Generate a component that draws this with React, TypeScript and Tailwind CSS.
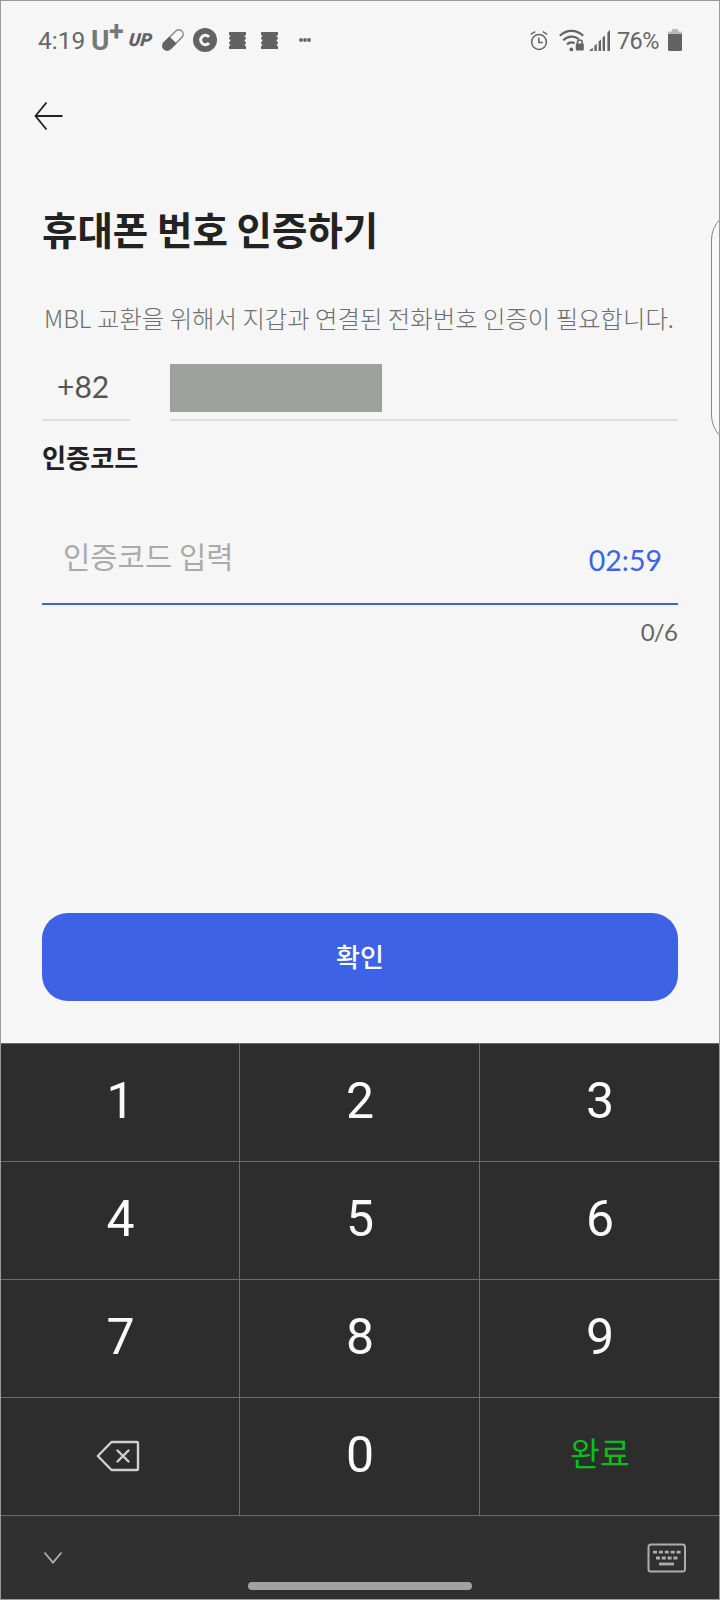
import React, { useState } from "react";

interface KeyProps {
  label: React.ReactNode;
  name: string;
  className?: string;
  onPress: () => void;
}

const AlarmIcon = () => (
  <svg width="18" height="21" viewBox="0 0 18 21" fill="none" stroke="#666" strokeWidth="1.5">
    <circle cx="9" cy="12" r="7.4" />
    <path d="M8.8 7.5v5h4M.8 4.3 5.2 1.6M17.2 4.3l-4.4-2.7" />
  </svg>
);

const WifiIcon = () => (
  <svg width="26" height="23" viewBox="0 0 26 23" fill="none" stroke="#636363" strokeWidth="2.2">
    <path d="M.8 6.8c6.8-6.6 16.6-6.6 23.4 0M4.2 11.3c4.6-4.6 11-4.9 15.6-1.1M8 15.4c2.3-2.2 5-2.5 7.6-1.1" />
    <circle cx="12.4" cy="20.4" r="1.9" fill="#636363" stroke="none" />
    <rect x="16.8" y="14.6" width="8" height="6.8" rx=".8" fill="#636363" stroke="none" />
    <path d="M18.4 15v-1.6a2.4 2.4 0 0 1 4.8 0V15" strokeWidth="1.5" />
  </svg>
);

const SignalIcon = () => (
  <svg width="22" height="21" viewBox="0 0 22 21" fill="#636363">
    <path d="M0 21l3.8-3.6V21zM5.4 21v-5.2l2.4-2.2V21zM9.6 21v-9.4L12 9.4V21zM13.6 21V7.6L16 5.4V21zM18.4 21V2.6L21 0v21z" />
  </svg>
);

const BatteryIcon = () => (
  <svg width="14" height="22" viewBox="0 0 14 22">
    <path d="M4 0h6v2.6h2.6Q14 2.6 14 4v1.5H0V4q0-1.4 1.4-1.4H4z" fill="#b9b9b9" />
    <path d="M0 5h14v15.4q0 1.6-1.6 1.6H1.6Q0 22 0 20.4z" fill="#636363" />
  </svg>
);

const PillIcon = () => (
  <svg width="22" height="22" viewBox="0 0 22 22">
    <g transform="rotate(45 11 11)">
      <rect x="6.6" y="-1.6" width="8.8" height="25.2" rx="4.4" fill="none" stroke="#777" strokeWidth="1.3" />
      <path d="M6 11h10v8.2a5 5 0 0 1-10 0z" fill="#636363" />
    </g>
  </svg>
);

const CoinIcon = () => (
  <svg width="24" height="24" viewBox="0 0 24 24">
    <circle cx="12" cy="12" r="12" fill="#636363" />
    <path d="M16 9a4.7 4.7 0 1 0 0 6" fill="none" stroke="#f5f5f5" strokeWidth="3" />
  </svg>
);

const TicketIcon = () => (
  <svg width="17" height="17" viewBox="0 0 17 17" fill="#636363">
    <path d="M0 0h17v2.8l-1.6 1.4 1.6 1.2v1.2l-1.6 1.900 1.600 1.900v1.200l-1.600 1.400 1.600 1.200V17H0v-2.800l1.600-1.200L0 11.600v-1.200l1.600-1.900L0 6.600V5.400l1.600-1.200L0 2.800z" />
  </svg>
);

const StatusBar = () => (
  <div className="flex h-[78px] items-center pl-[37px] pr-[37px] font-[Roboto,sans-serif] text-[24px] text-[#666]">
    <span className="mt-[2px] w-[53px] text-[24.5px]">4:19</span>
    <span className="flex w-[37px] font-bold leading-none text-[#777]">
      <span className="mt-[2px] w-[18px] text-[28px]">U</span>
      <span className="-mt-[6px] text-[27px]">+</span>
    </span>
    <span className="w-[34px] -skew-x-6 pl-[1px] text-[18px] font-black italic leading-none text-[#636363]">UP</span>
    <PillIcon />
    <span className="ml-[9px]"><CoinIcon /></span>
    <span className="ml-[12px]"><TicketIcon /></span>
    <span className="ml-[15px]"><TicketIcon /></span>
    <svg className="ml-[21px]" width="12" height="4" viewBox="0 0 12 4" fill="#636363">
      <circle cx="2" cy="2" r="1.9" />
      <circle cx="6" cy="2" r="1.9" />
      <circle cx="10" cy="2" r="1.9" />
    </svg>

    <div className="ml-auto flex items-center">
      <AlarmIcon />
      <span className="ml-[11px]"><WifiIcon /></span>
      <span className="ml-[4px]"><SignalIcon /></span>
      <span className="mt-[3px] ml-[6px] w-[51px] text-[23.5px] tracking-[-0.6px]">76%</span>
      <BatteryIcon />
    </div>
  </div>
);

const BackspaceIcon = () => (
  <svg className="-ml-[6px] mt-[1px]" width="44" height="32" viewBox="0 0 44 32" fill="none" stroke="#d0d0d0" strokeWidth="2.4" strokeLinejoin="round" strokeLinecap="round">
    <path d="M15.5 2H41a1 1 0 0 1 1 1v26a1 1 0 0 1-1 1H15.5L1.8 16z" />
    <path d="m21.5 10.5 11 11M32.5 10.5l-11 11" />
  </svg>
);

const KeyboardIcon = () => (
  <svg width="40" height="30" viewBox="0 0 40 30" fill="none" stroke="#adadad">
    <rect x="1.5" y="1.5" width="36.5" height="27" rx="2.5" strokeWidth="2" />
    <path d="M6 9.2h28" strokeWidth="2.8" strokeDasharray="4 1.9" />
    <path d="M9 15h23" strokeWidth="2.8" strokeDasharray="4 1.8" />
    <path d="M12 21h15" strokeWidth="2.8" />
  </svg>
);

const Key: React.FC<KeyProps> = ({ label, name, className = "", onPress }) => (
  <button
    type="button"
    onClick={onPress}
    aria-label={name}
    className={`flex h-[118px] items-center justify-center border-t border-r border-[#6b6b6b] pb-[2px] pl-[1px] nth-[3n]:border-r-0 ${className}`}
  >
    {label}
  </button>
);

const App: React.FC = () => {
  const [code, setCode] = useState("");

  const addDigit = (digit: string) => {
    setCode((prev) => (prev.length < 6 ? prev + digit : prev));
  };

  return (
    <div className="relative flex h-[1600px] w-[720px] flex-col overflow-hidden border border-[#999] bg-[#f6f6f6] font-['Noto_Sans_CJK_KR',sans-serif] text-[#222]">
      <StatusBar />

      <header className="flex h-[76px] items-center pb-[2px] pl-[33px]">
        <button type="button" aria-label="뒤로">
          <svg width="29" height="30" viewBox="0 0 29 30" fill="none" stroke="#222" strokeWidth="1.8">
            <path d="M28.5 15H1.5M12.5 1.5 1.5 15l11 13.5" />
          </svg>
        </button>
      </header>

      <main className="flex h-[888px] flex-col px-[41px]">
        <h1 className="mt-[45px] h-[56px] text-[38.5px] font-bold leading-[56px]">휴대폰 번호 인증하기</h1>
        <p className="mt-[44px] h-[36px] whitespace-nowrap pl-[2px] text-[24.4px] font-light leading-[36px] text-[#6e6e6e]">
          MBL 교환을 위해서 지갑과 연결된 전화번호 인증이 필요합니다.
        </p>

        <div className="mt-[28px] flex h-[57px] justify-between">
          <div className="w-[88px] border-b-2 border-[#dedede] pl-[15px] font-[Lato,sans-serif] text-[30px] leading-[44px] text-[#555]">+82</div>
          <div className="w-[507px] border-b-2 border-[#dedede]">
            <div className="-ml-[1px] h-[48px] w-[212px] bg-[#9fa19f]" />
          </div>
        </div>

        <h2 className="mt-[17px] h-[38px] text-[26.2px] font-bold leading-[38px]">인증코드</h2>

        <div className="mt-[45px] flex h-[84px] items-start justify-between border-b-2 border-[#3d62e5] pl-[21px] pr-[16px]">
          <span className="mt-[13px] text-[29.7px] leading-[44px] text-[#aaa]">{code || "인증코드 입력"}</span>
          <span className="mt-[18px] font-[Lato,sans-serif] text-[28.5px] leading-[43px] text-[#3d62e5]">02:59</span>
        </div>
        <div className="mt-[9px] pr-[1px] text-right font-[Lato,sans-serif] text-[24px] leading-[36px] tracking-[-0.8px] text-[#666]">{code.length}/6</div>

        <button type="button" className="mt-auto mb-[42px] h-[88px] w-full rounded-[26px] bg-[#3d62e5] pb-[3px] text-[26px] font-medium text-white">
          확인
        </button>
      </main>

      <section className="flex flex-1 flex-col bg-[#2d2d2d]">
        <div className="grid grid-cols-[239px_240px_239px] font-[Roboto,'Noto_Sans_CJK_KR',sans-serif] text-[50px] text-[#fafafa]">
          {["1", "2", "3", "4", "5", "6", "7", "8", "9"].map((digit) => (
            <Key key={digit} label={digit} name={digit} onPress={() => addDigit(digit)} />
          ))}
          <Key label={<BackspaceIcon />} name="지우기" onPress={() => setCode((prev) => prev.slice(0, -1))} />
          <Key label="0" name="0" onPress={() => addDigit("0")} />
          <Key label="완료" name="완료" className="text-[32.5px] text-[#0abf1b]" onPress={() => {}} />
        </div>

        <div className="relative flex flex-1 items-center justify-between border-t border-[#6b6b6b] bg-[#303030] pl-[42px] pr-[32px]">
          <svg width="20" height="14" viewBox="0 0 20 14" fill="none" stroke="#b0b0b0" strokeWidth="1.8">
            <path d="m1.5 1.5 8.5 10 8.5-10" />
          </svg>
          <KeyboardIcon />
          <div className="absolute bottom-[9px] left-[247px] h-[8px] w-[224px] rounded-full bg-[#a1a1a1]" />
        </div>
      </section>

      {/* 엣지 패널 핸들 */}
      <div className="absolute left-[710px] top-[209px] h-[235px] w-[60px] rounded-[30px] border-[1.5px] border-[#858585] bg-[#f8f8f8]" />
    </div>
  );
};

export default App;
